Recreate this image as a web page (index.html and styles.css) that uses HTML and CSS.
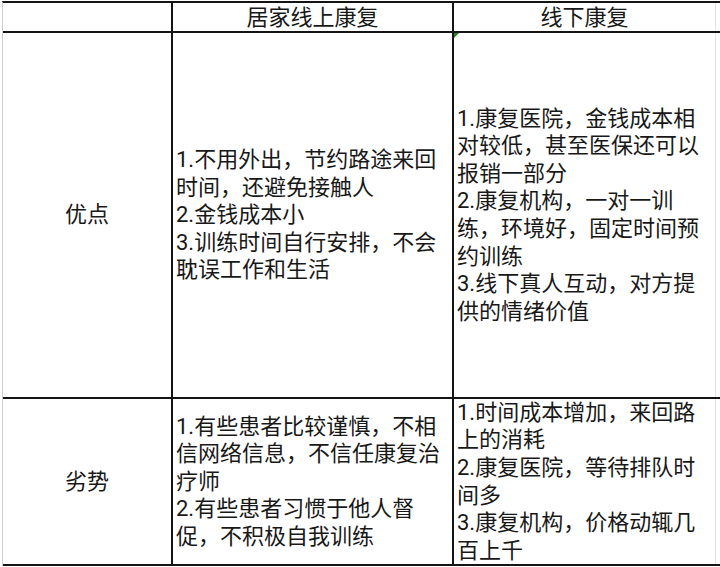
FILE: index.html
```html
<!DOCTYPE html>
<html lang="zh-CN">
<head>
<meta charset="utf-8">
<title>居家线上康复 vs 线下康复</title>
<link rel="stylesheet" href="styles.css">
</head>
<body>
<div class="sheet">
  <div class="cell head"></div>
  <div class="cell head center">居家线上康复</div>
  <div class="cell head center last">线下康复</div>

  <div class="cell label center">优点</div>
  <div class="cell">
    <div>1.不用外出，节约路途来回时间，还避免接触人</div>
    <div>2.金钱成本小</div>
    <div>3.训练时间自行安排，不会耽误工作和生活</div>
  </div>
  <div class="cell last marked">
    <span class="note"></span>
    <div>1.康复医院，金钱成本相对较低，甚至医保还可以报销一部分</div>
    <div>2.康复机构，一对一训练，环境好，固定时间预约训练</div>
    <div>3.线下真人互动，对方提供的情绪价值</div>
  </div>

  <div class="cell label center">劣势</div>
  <div class="cell">
    <div>1.有些患者比较谨慎，不相信网络信息，不信任康复治疗师</div>
    <div>2.有些患者习惯于他人督促，不积极自我训练</div>
  </div>
  <div class="cell last">
    <div>1.时间成本增加，来回路上的消耗</div>
    <div>2.康复医院，等待排队时间多</div>
    <div>3.康复机构，价格动辄几百上千</div>
  </div>
</div>
</body>
</html>
```

FILE: styles.css
```css
html, body {
  margin: 0;
  padding: 0;
  background: #ffffff;
}

.sheet {
  display: grid;
  grid-template-columns: 170px 281px 266px;
  grid-template-rows: 30px 366px 167px;
  margin: 1px 0 0 2px;
  border-top: 2px solid #141414;
  border-left: 1px solid #cfcfcf;
  font-family: Roboto, "Noto Sans CJK SC", sans-serif;
  font-size: 22px;
  line-height: 27.6px;
  color: #181818;
}

.cell {
  position: relative;
  box-sizing: border-box;
  display: flex;
  flex-direction: column;
  justify-content: center;
  padding: 0 3px;
  border-bottom: 2px solid #141414;
  border-right: 2px solid #141414;
  overflow: visible;
}

.cell.last {
  border-right: none;
  padding-right: 8px;
  background-image: linear-gradient(#e4e4e4, #e4e4e4);
  background-size: 1px 100%;
  background-position: 261px 0;
  background-repeat: no-repeat;
}

.center {
  align-items: center;
  text-align: center;
}

.head {
  padding-top: 1px;
}

.note {
  position: absolute;
  left: 0;
  top: 0;
  width: 0;
  height: 0;
  border-top: 5px solid #2f7d2a;
  border-right: 5px solid transparent;
}
```
